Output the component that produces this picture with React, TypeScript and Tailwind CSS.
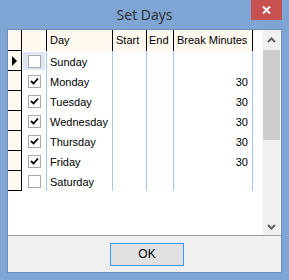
const days = [
  { name: 'Sunday', on: false, mins: '' },
  { name: 'Monday', on: true, mins: '30' },
  { name: 'Tuesday', on: true, mins: '30' },
  { name: 'Wednesday', on: true, mins: '30' },
  { name: 'Thursday', on: true, mins: '30' },
  { name: 'Friday', on: true, mins: '30' },
  { name: 'Saturday', on: false, mins: '' },
];

function CheckBox({ checked }: { checked: boolean }) {
  return (
    <div className="w-[13px] h-[13px] border border-[#a9a9a9] bg-white flex items-center justify-center">
      {checked && (
        <svg width="11" height="11" viewBox="0 0 11 11">
          <path d="M2 5 L4.5 7.5 L9 2.5" fill="none" stroke="#000" strokeWidth="1.8" />
        </svg>
      )}
    </div>
  );
}

function Chevron({ down }: { down?: boolean }) {
  return (
    <svg width="9" height="6" viewBox="0 0 9 6">
      <path
        d={down ? 'M1 1 L4.5 4.5 L8 1' : 'M1 5 L4.5 1.5 L8 5'}
        fill="none"
        stroke="#606060"
        strokeWidth="2"
      />
    </svg>
  );
}

export default function App() {
  return (
    <div className="w-[289px] h-[280px] bg-[#7fa5d4] flex flex-col font-['Liberation_Sans',sans-serif] text-[11px] text-black">
      {/* Title bar */}
      <div className="relative h-[29px] shrink-0 flex items-center justify-center">
        <span className="font-['Open_Sans',sans-serif] text-[14px] text-[#2b2b2b]">Set Days</span>
        <div className="absolute top-0 right-[7px] w-[31px] h-[20px] bg-[#c75050] flex items-center justify-center">
          <svg width="9" height="8" viewBox="0 0 9 8">
            <path d="M1 0.5 L8 7.5 M8 0.5 L1 7.5" stroke="#fff" strokeWidth="2" />
          </svg>
        </div>
      </div>

      {/* Client area */}
      <div className="mx-[7px] mb-[7px] flex-1 flex flex-col border border-[#6b8dba] bg-[#f0f0f0]">
        {/* Grid */}
        <div className="h-[206px] shrink-0 bg-white border-b border-[#a0a0a0] flex">
          <div className="flex-1 flex flex-col">
            {/* Header */}
            <div className="flex h-[21px] bg-[#fff9ef] w-[245px]">
              <div className="w-[14px] border-r border-b border-black" />
              <div className="w-[25px] border-r border-black" />
              <div className="w-[66px] border-r border-black pl-[3px] flex items-center">Day</div>
              <div className="w-[34px] border-r border-black pl-[3px] flex items-center">Start</div>
              <div className="w-[27px] border-r border-black pl-[2px] flex items-center">End</div>
              <div className="w-[79px] border-r border-black pl-[3px] flex items-center">Break Minutes</div>
            </div>
            {/* Rows */}
            {days.map((d, i) => (
              <div key={d.name} className="flex h-[20px] w-[245px]">
                <div className="w-[14px] bg-[#fff9ef] border-r border-b border-black flex items-center pl-[4px]">
                  {i === 0 && (
                    <div className="w-0 h-0 border-y-[5px] border-y-transparent border-l-[5px] border-l-black" />
                  )}
                </div>
                <div className="w-[25px] border-r border-[#a3c6ec] p-[1px]">
                  <div className={`h-full flex items-center justify-center pt-[1px] ${i === 0 ? 'bg-[#dde6f2]' : ''}`}>
                    <CheckBox checked={d.on} />
                  </div>
                </div>
                <div className="w-[66px] border-r border-[#a3c6ec] pl-[3px] pt-[3px] flex items-center">{d.name}</div>
                <div className="w-[34px] border-r border-[#a3c6ec]" />
                <div className="w-[27px] border-r border-[#a3c6ec]" />
                <div className="w-[79px] border-r border-[#a3c6ec] pr-[4px] pt-[3px] flex items-center justify-end">{d.mins}</div>
              </div>
            ))}
          </div>
          {/* Scrollbar */}
          <div className="w-[17px] mr-[1px] bg-[#f0f0f0] flex flex-col">
            <div className="h-[20px] flex items-center justify-center">
              <Chevron />
            </div>
            <div className="h-[90px] bg-[#cdcdcd]" />
            <div className="flex-1" />
            <div className="h-[17px] flex items-center justify-center">
              <Chevron down />
            </div>
          </div>
        </div>

        {/* Button panel */}
        <div className="flex-1 flex items-center justify-center pl-[5px]">
          <button className="w-[74px] h-[23px] border border-[#3399ff] bg-[#e1e1e1] text-[12px] font-['Liberation_Sans',sans-serif]">
            OK
          </button>
        </div>
      </div>
    </div>
  );
}
